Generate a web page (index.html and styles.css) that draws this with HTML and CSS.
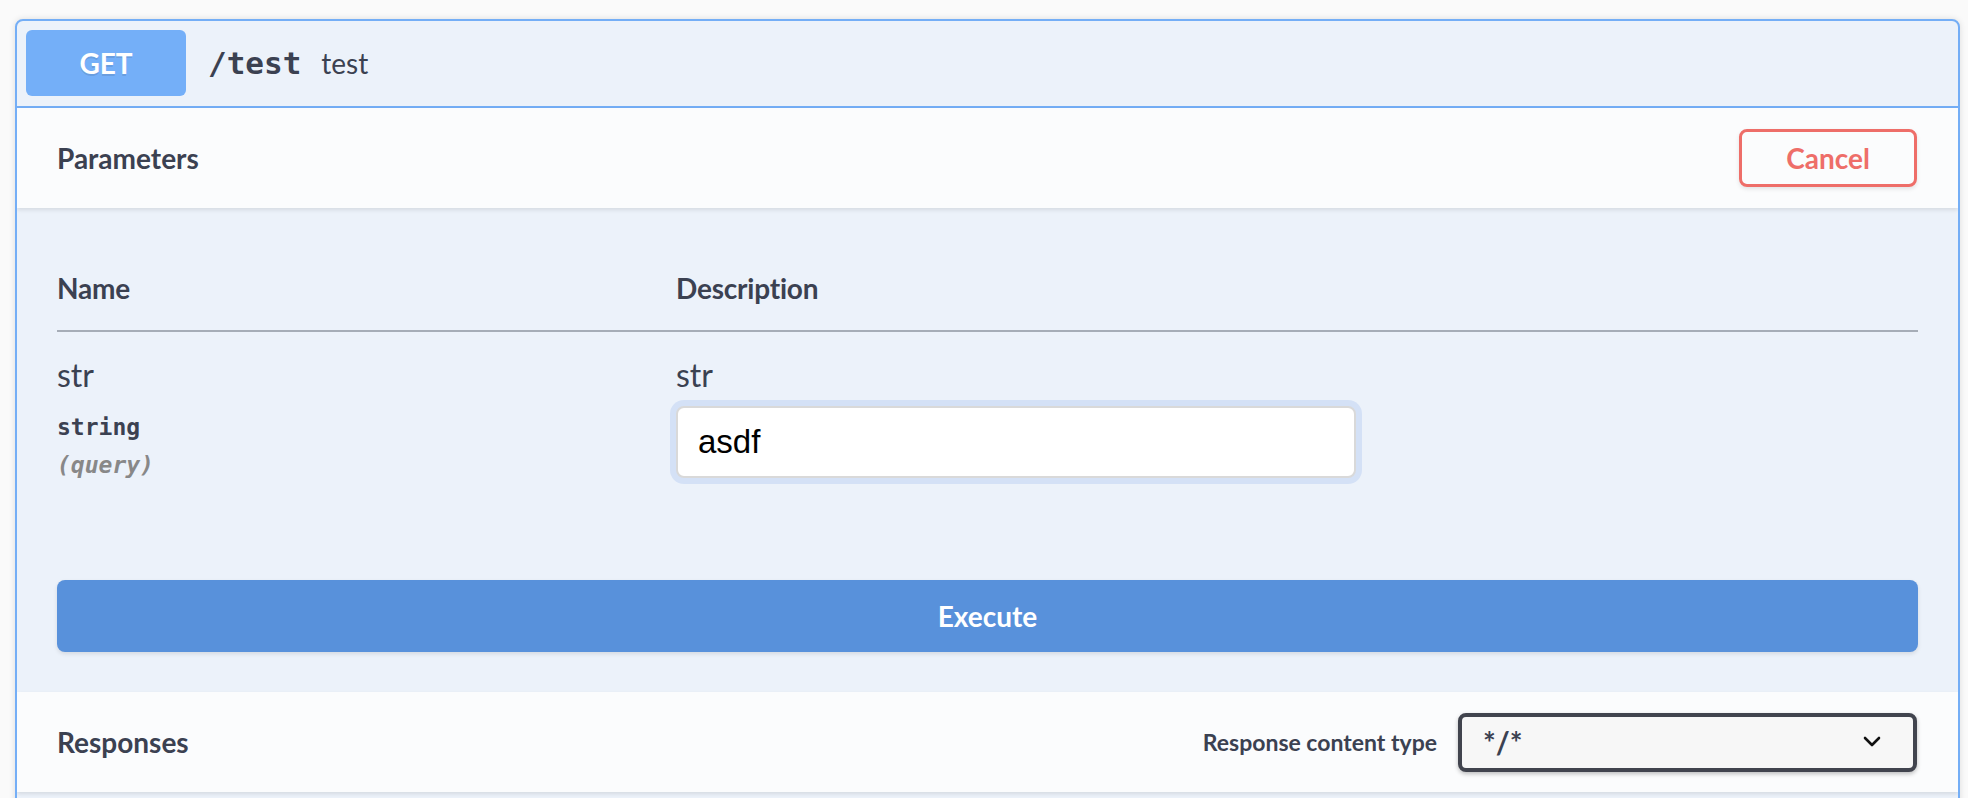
FILE: index.html
```html
<!DOCTYPE html>
<html>
<head>
<meta charset="utf-8">
<link rel="stylesheet" href="styles.css">
</head>
<body>
<div class="page">
  <div class="opblock">
    <div class="summary">
      <span class="method">GET</span>
      <span class="path">/test</span>
      <span class="summary-desc">test</span>
    </div>
    <div class="section-header">
      <h4 class="section-title">Parameters</h4>
      <button class="btn-cancel">Cancel</button>
    </div>
    <div class="params">
      <div class="param-table">
        <div class="th">Name</div>
        <div class="th">Description</div>
        <div class="td">
          <div class="param-name">str</div>
          <div class="param-type">string</div>
          <div class="param-in">(query)</div>
        </div>
        <div class="td">
          <div class="param-desc">str</div>
          <input class="param-input" type="text" value="asdf">
        </div>
      </div>
      <div class="execute-wrapper">
        <button class="btn-execute">Execute</button>
      </div>
    </div>
    <div class="section-header">
      <h4 class="section-title">Responses</h4>
      <div class="content-type">
        <span class="content-type-label">Response content type</span>
        <div class="select">
          <span>*/*</span>
          <svg class="chevron" width="20" height="12" viewBox="0 0 20 12"><polyline points="3,2 10,9 17,2" fill="none" stroke="#111" stroke-width="2.6" stroke-linecap="round" stroke-linejoin="round"/></svg>
        </div>
      </div>
    </div>
    <div class="responses-body"></div>
  </div>
</div>
</body>
</html>
```

FILE: styles.css
```css
html, body {
  margin: 0;
  padding: 0;
  background: #fafafa;
  overflow: hidden;
}
body {
  font-family: Lato, "Open Sans", sans-serif;
  color: #3b4151;
}
.page {
  padding: 19px 8px 0 15px;
}
.opblock {
  border: 2px solid #74aef6;
  border-radius: 8px;
  background: #ecf2fa;
  box-shadow: 0 0 6px rgba(0, 0, 0, 0.12);
  overflow: hidden;
}
.summary {
  display: flex;
  align-items: center;
  padding: 9px 9px 10px;
  border-bottom: 2px solid #74aef6;
}
.method {
  width: 160px;
  height: 66px;
  display: flex;
  align-items: center;
  justify-content: center;
  background: #74aff8;
  border-radius: 6px;
  color: #fff;
  font-weight: 700;
  font-size: 28px;
  text-shadow: 0 2px 0 rgba(0, 0, 0, 0.1);
}
.path {
  margin-left: 22px;
  font-family: "DejaVu Sans Mono", monospace;
  font-weight: 700;
  font-size: 31px;
  color: #3b4151;
}
.summary-desc {
  margin-left: 20px;
  font-size: 28px;
  color: #3b4151;
}
.section-header {
  height: 100px;
  display: flex;
  align-items: center;
  justify-content: space-between;
  padding: 0 40px;
  background: #fbfcfd;
  box-shadow: 0 2px 4px rgba(0, 0, 0, 0.1);
  position: relative;
}
.section-title {
  margin: 0;
  font-size: 28px;
  font-weight: 700;
  color: #3b4151;
}
.btn-cancel {
  width: 178px;
  height: 58px;
  margin-right: 1px;
  border: 3px solid #ee6e69;
  border-radius: 8px;
  background: transparent;
  color: #ee6e69;
  font-family: Lato, sans-serif;
  font-weight: 700;
  font-size: 28px;
  box-shadow: 0 2px 4px rgba(0, 0, 0, 0.1);
}
.params {
  padding-top: 63px;
}
.param-table {
  display: grid;
  grid-template-columns: 619px 1fr;
  padding: 0 40px 61px;
}
.th {
  font-size: 28px;
  font-weight: 700;
  line-height: 34px;
  letter-spacing: -0.2px;
  padding-bottom: 25px;
  border-bottom: 2px solid #a6adb7;
}
.td {
  padding-top: 24px;
}
.param-name, .param-desc {
  font-size: 32px;
  line-height: 38px;
  color: #3b4151;
}
.param-type {
  margin-top: 19px;
  font-family: "DejaVu Sans Mono", monospace;
  font-weight: 700;
  font-size: 23px;
  line-height: 28px;
}
.param-in {
  margin-top: 10px;
  font-family: "DejaVu Sans Mono", monospace;
  font-style: italic;
  font-weight: 700;
  font-size: 23px;
  line-height: 28px;
  color: #888;
}
.param-input {
  display: block;
  box-sizing: border-box;
  margin-top: 12px;
  width: 680px;
  height: 72px;
  padding: 0 20px;
  border: 2px solid #d9d9d9;
  border-radius: 8px;
  background: #fff;
  box-shadow: 0 0 0 6px #d4e1f6;
  font-family: "Liberation Sans", Arial, sans-serif;
  font-size: 33px;
  color: #000;
  outline: none;
}
.execute-wrapper {
  padding: 40px 40px;
}
.btn-execute {
  display: block;
  width: 100%;
  height: 72px;
  border: none;
  border-radius: 8px;
  background: #5891db;
  color: #fff;
  font-family: Lato, sans-serif;
  font-weight: 700;
  font-size: 28px;
  box-shadow: 0 2px 4px rgba(0, 0, 0, 0.1);
}
.content-type {
  display: flex;
  align-items: center;
  gap: 21px;
}
.content-type-label {
  font-size: 23px;
  font-weight: 700;
}
.select {
  box-sizing: border-box;
  width: 459px;
  height: 59px;
  margin-right: 1px;
  display: flex;
  align-items: center;
  justify-content: space-between;
  padding: 0 31px 0 21px;
  border: 4px solid #41444e;
  border-radius: 8px;
  background: #f7f7f7;
  box-shadow: 0 2px 4px rgba(0, 0, 0, 0.25);
  font-size: 30px;
  font-weight: 700;
}
.chevron {
  display: block;
}
.responses-body {
  height: 40px;
}
```
